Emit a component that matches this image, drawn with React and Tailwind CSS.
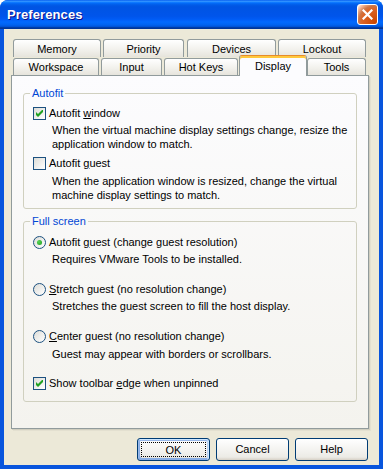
import React from 'react';

function Check({ checked }) {
  return (
    <span className="w-[13px] h-[13px] shrink-0 border border-[#1C5180] bg-[linear-gradient(135deg,#DCDCD7,#fff)] flex items-center justify-center">
      {checked && (
        <svg width="7" height="7" viewBox="0 0 7 7">
          <polygon points="0,2 2,4 7,-1 7,2 2,7 0,5" fill="#21A121" />
        </svg>
      )}
    </span>
  );
}

function Radio({ checked }) {
  return (
    <span className="w-[13px] h-[13px] shrink-0 rounded-full border border-[#1C5180] bg-[linear-gradient(135deg,#DCDCD7,#fff)] flex items-center justify-center">
      {checked && (
        <span className="w-[5px] h-[5px] rounded-full bg-[radial-gradient(circle_at_35%_35%,#55D655,#1E9A1E)]" />
      )}
    </span>
  );
}

function Tab({ label, w, ml, selected }) {
  if (selected) {
    return (
      <div
        className={`${w} ${ml} relative top-[1px] z-10 h-[21px] shrink-0 rounded-t-[3px] border border-b-0 border-[#919B9C] border-t-[#E68B2C] bg-[#FCFCFE] shadow-[inset_0_2px_0_#FFC83C] flex justify-center pt-[3px] leading-[14px]`}
      >
        {label}
      </div>
    );
  }
  return (
    <div
      className={`${w} ${ml} h-full shrink-0 rounded-t-[3px] border border-b-0 border-[#919B9C] bg-[linear-gradient(to_bottom,#fff,#F1F0EB_60%,#E6E4DC)] flex items-center justify-center leading-[14px]`}
    >
      {label}
    </div>
  );
}

function Btn({ children, primary }) {
  return (
    <button
      className={`w-[73px] h-[23px] rounded-[3px] border border-[#003C74] bg-[linear-gradient(180deg,#fff,#ECEBE6_86%,#D6D0C5)] text-black ${
        primary
          ? 'p-[3px] shadow-[inset_-1px_1px_#cee7ff,inset_1px_2px_#98b8ea,inset_-2px_2px_#bcd4f6,inset_1px_-1px_#89ade4,inset_2px_-2px_#89ade4]'
          : ''
      }`}
    >
      {primary ? (
        <span className="w-full h-full border border-dotted border-black flex items-center justify-center leading-[14px]">
          {children}
        </span>
      ) : (
        <span className="leading-[14px]">{children}</span>
      )}
    </button>
  );
}

export default function App() {
  return (
    <div className="w-[383px] h-[469px] rounded-t-[8px] bg-[#0855DD] flex flex-col overflow-hidden font-['Liberation_Sans',Arial,sans-serif] text-[11px] text-black">
      {/* Title bar */}
      <div className="h-[29px] shrink-0 flex items-center justify-between pl-[7px] pr-[5px] bg-[linear-gradient(to_bottom,#0058ee_0%,#3593ff_4%,#288eff_6%,#127dff_8%,#036ffc_10%,#0262ee_14%,#0057e5_20%,#0054e3_24%,#0055eb_56%,#005bf5_66%,#026afe_76%,#0062ef_86%,#0052d6_92%,#0040ab_94%,#003092_100%)]">
        <span className="text-white font-bold text-[13px] [text-shadow:1px_1px_#0f1089] tracking-[0.1px]">
          Preferences
        </span>
        <div className="w-[21px] h-[21px] rounded-[3px] border border-white bg-[radial-gradient(circle_at_90%_90%,#cc4600_0%,#dc6527_55%,#cd7546_68%,#ffccb2_90%,white_100%)] flex items-center justify-center">
          <svg width="11" height="11" viewBox="0 0 11 11">
            <path d="M1.5 1.5 L9.5 9.5 M9.5 1.5 L1.5 9.5" stroke="#fff" strokeWidth="2.2" strokeLinecap="square" />
          </svg>
        </div>
      </div>

      {/* Body */}
      <div className="flex-1 mx-[4px] mb-[4px] bg-[#ECE9D8] flex flex-col">
        {/* Tab rows */}
        <div className="flex h-[18px] mt-[10px] ml-[9px]">
          <Tab label="Memory" w="w-[88px]" ml="ml-0" />
          <Tab label="Priority" w="w-[81px]" ml="ml-[2px]" />
          <Tab label="Devices" w="w-[89px]" ml="ml-[3px]" />
          <Tab label="Lockout" w="w-[88px]" ml="ml-[2px]" />
        </div>
        <div className="flex items-end h-[17px] mt-[1px] ml-[9px]">
          <Tab label="Workspace" w="w-[86px]" ml="ml-0" />
          <Tab label="Input" w="w-[61px]" ml="ml-[2px]" />
          <Tab label="Hot Keys" w="w-[74px]" ml="ml-[2px]" />
          <Tab label="Display" w="w-[68px]" ml="ml-[1px]" selected />
          <Tab label="Tools" w="w-[59px]" ml="ml-0" />
        </div>

        {/* Panel */}
        <div className="ml-[7px] w-[358px] h-[354px] border border-[#919B9C] bg-[linear-gradient(to_bottom,#FCFCFE,#F4F3EE)] shadow-[1px_1px_0_#D0CEBF,2px_2px_0_#E3E0D0] px-[11px] pt-[10px]">
          <fieldset className="border border-[#D0D0BF] rounded-[3px] pl-[9px] pt-[6px] pb-[6px]">
            <legend className="-ml-[3px] px-[2px] text-[#0046D5] leading-[14px]">Autofit</legend>
            <div className="flex items-center gap-[3px] h-[14px] leading-[14px]">
              <Check checked />
              <span>
                Autofit <u>w</u>indow
              </span>
            </div>
            <div className="ml-[19px] mt-[3px] leading-[14px] whitespace-nowrap">
              When the virtual machine display settings change, resize the
              <br />
              application window to match.
            </div>
            <div className="flex items-center gap-[3px] h-[14px] leading-[14px] mt-[5px]">
              <Check />
              <span>
                Autofit <u>g</u>uest
              </span>
            </div>
            <div className="ml-[19px] mt-[4px] leading-[14px] whitespace-nowrap">
              When the application window is resized, change the virtual
              <br />
              machine display settings to match.
            </div>
          </fieldset>

          <fieldset className="mt-[5px] border border-[#D0D0BF] rounded-[3px] pl-[9px] pt-[7px] pb-[11px]">
            <legend className="-ml-[3px] px-[2px] text-[#0046D5] leading-[14px]">Full screen</legend>
            <div className="flex items-center gap-[3px] h-[14px] leading-[14px]">
              <Radio checked />
              <span>
                Autofit <u>g</u>uest (change guest resolution)
              </span>
            </div>
            <div className="ml-[19px] mt-[3px] leading-[14px]">Requires VMware Tools to be installed.</div>
            <div className="flex items-center gap-[3px] h-[14px] leading-[14px] mt-[16px]">
              <Radio />
              <span>
                <u>S</u>tretch guest (no resolution change)
              </span>
            </div>
            <div className="ml-[19px] mt-[3px] leading-[14px]">Stretches the guest screen to fill the host display.</div>
            <div className="flex items-center gap-[3px] h-[14px] leading-[14px] mt-[16px]">
              <Radio />
              <span>
                <u>C</u>enter guest (no resolution change)
              </span>
            </div>
            <div className="ml-[19px] mt-[4px] leading-[14px]">Guest may appear with borders or scrollbars.</div>
            <div className="flex items-center gap-[3px] h-[14px] leading-[14px] mt-[15px]">
              <Check checked />
              <span>
                Show toolbar <u>e</u>dge when unpinned
              </span>
            </div>
          </fieldset>
        </div>

        {/* Buttons */}
        <div className="mt-[9px] pr-[11px] flex justify-end gap-[6px]">
          <Btn primary>OK</Btn>
          <Btn>Cancel</Btn>
          <Btn>Help</Btn>
        </div>
      </div>
    </div>
  );
}
